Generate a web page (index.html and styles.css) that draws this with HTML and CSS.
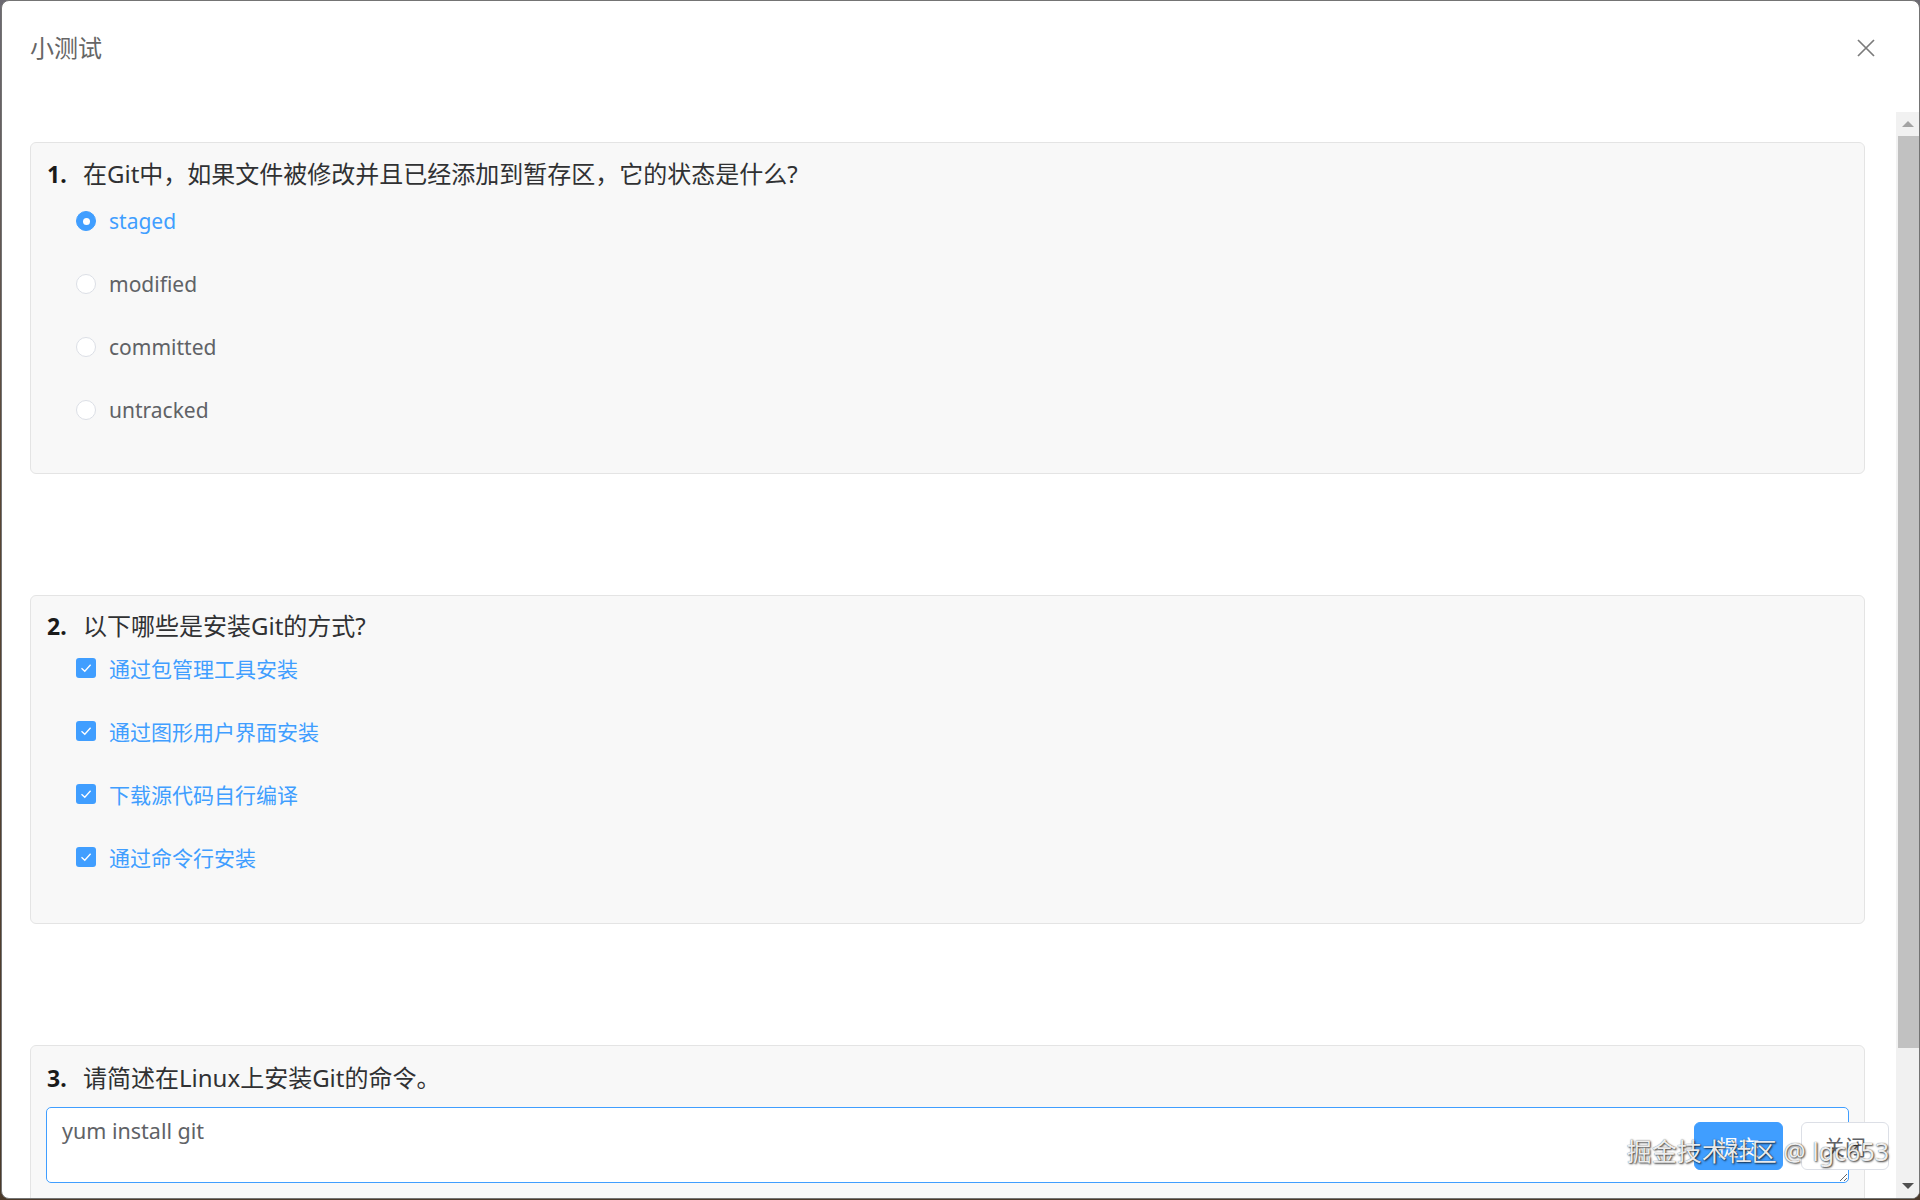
FILE: index.html
```html
<!DOCTYPE html>
<html lang="zh-CN">
<head>
    <meta charset="UTF-8">
    <meta name="viewport" content="width=device-width, initial-scale=1.0">
    <title>小测试</title>
    <link rel="stylesheet" href="styles.css">
</head>
<body>

    <div class="window">
        <!-- Dialog header -->
        <div class="dialog-header">
            <span class="dialog-title">小测试</span>
            <button class="dialog-close" type="button" aria-label="Close">
                <svg width="18" height="18" viewBox="0 0 18 18">
                    <path d="M1 1 L17 17 M17 1 L1 17" stroke="#7b7b7b" stroke-width="1.7" fill="none"/>
                </svg>
            </button>
        </div>

        <div class="dialog-body">
            <div class="quiz">

                <!-- Single choice -->
                <section class="question single">
                    <div class="q-title"><span class="q-no">1.</span>在Git中，如果文件被修改并且已经添加到暂存区，它的状态是什么?</div>
                    <div class="options radios">
                        <label class="option is-checked"><span class="radio"></span>staged</label>
                        <label class="option"><span class="radio"></span>modified</label>
                        <label class="option"><span class="radio"></span>committed</label>
                        <label class="option"><span class="radio"></span>untracked</label>
                    </div>
                </section>

                <!-- Multiple choice -->
                <section class="question multi">
                    <div class="q-title"><span class="q-no">2.</span>以下哪些是安装Git的方式?</div>
                    <div class="options checks">
                        <label class="option is-checked"><span class="checkbox"><svg width="20" height="20" viewBox="0 0 20 20"><path d="M5.5 10.2 L8.8 13.3 L14.6 6.8" stroke="#fff" stroke-width="1.3" fill="none"/></svg></span>通过包管理工具安装</label>
                        <label class="option is-checked"><span class="checkbox"><svg width="20" height="20" viewBox="0 0 20 20"><path d="M5.5 10.2 L8.8 13.3 L14.6 6.8" stroke="#fff" stroke-width="1.3" fill="none"/></svg></span>通过图形用户界面安装</label>
                        <label class="option is-checked"><span class="checkbox"><svg width="20" height="20" viewBox="0 0 20 20"><path d="M5.5 10.2 L8.8 13.3 L14.6 6.8" stroke="#fff" stroke-width="1.3" fill="none"/></svg></span>下载源代码自行编译</label>
                        <label class="option is-checked"><span class="checkbox"><svg width="20" height="20" viewBox="0 0 20 20"><path d="M5.5 10.2 L8.8 13.3 L14.6 6.8" stroke="#fff" stroke-width="1.3" fill="none"/></svg></span>通过命令行安装</label>
                    </div>
                </section>

                <!-- Short answer -->
                <section class="question text">
                    <div class="q-title"><span class="q-no">3.</span>请简述在Linux上安装Git的命令。</div>
                    <textarea class="answer" spellcheck="false">yum install git</textarea>
                </section>

            </div>

            <div class="scrollbar">
                <span class="sb-btn"><span class="arrow-up"></span></span>
                <span class="sb-thumb"></span>
                <span class="sb-track"></span>
                <span class="sb-btn"><span class="arrow-down"></span></span>
            </div>
        </div>

        <div class="dialog-footer">
            <button class="btn btn-primary" type="button">提交</button>
            <button class="btn" type="button">关闭</button>
        </div>

        <div class="watermark">掘金技术社区 @ lgc653</div>
    </div>

</body>
</html>
```

FILE: styles.css
```css
/* Base */
html,
body {
    margin: 0;
}

body {
    width: 1920px;
    height: 1200px;
    padding: 0 0 1px 1px;
    box-sizing: border-box;
    overflow: hidden;
    background: linear-gradient(to bottom, #6c6a72, #5a4634 40%, #4b3a2a);
    font-family: "Noto Sans", "Noto Sans CJK SC", sans-serif;
}

/* Window frame */
.window {
    position: relative;
    height: 1199px;
    box-sizing: border-box;
    border: 1px solid #747474;
    border-radius: 8px;
    background: #fff;
    overflow: hidden;
    display: flex;
    flex-direction: column;
}

/* Header */
.dialog-header {
    flex: none;
    height: 111px;
    box-sizing: border-box;
    padding: 0 44px 17px 28px;
    display: flex;
    align-items: center;
    justify-content: space-between;
}

.dialog-title {
    font-size: 24px;
    line-height: 30px;
    color: #666;
}

.dialog-close {
    width: 18px;
    height: 18px;
    padding: 0;
    border: none;
    background: none;
    display: flex;
}

/* Body */
.dialog-body {
    flex: 1;
    min-height: 0;
    display: flex;
}

.quiz {
    flex: 1;
    overflow: hidden;
    padding: 30px 31px 0 28px;
    display: flex;
    flex-direction: column;
    gap: 121px;
}

.question {
    flex: none;
    background: #f8f8f8;
    border: 1px solid #e4e4e4;
    border-radius: 6px;
    padding: 16px 15px 0;
}

.question.single {
    padding-bottom: 42.5px;
}

.question.multi {
    padding-top: 15px;
    padding-bottom: 46px;
}

.question.text {
    padding-top: 17px;
    padding-bottom: 30px;
}

.q-title {
    font-size: 24px;
    line-height: 30px;
    color: #303133;
    padding-left: 1px;
}

.q-no {
    display: inline-block;
    width: 36px;
    font-size: 23px;
    font-weight: 700;
    color: #1a1a1a;
}

/* Options */
.options {
    display: flex;
    flex-direction: column;
    gap: 23px;
    padding-left: 30px;
}

.radios {
    margin-top: 12px;
}

.checks {
    margin-top: 7px;
}

.option {
    height: 40px;
    display: flex;
    align-items: center;
    gap: 13px;
    font-size: 21px;
    color: #606266;
}

.option.is-checked {
    color: #409eff;
}

.radio {
    width: 20px;
    height: 20px;
    box-sizing: border-box;
    border: 1px solid #dcdfe6;
    border-radius: 50%;
    background: #fff;
    display: flex;
    align-items: center;
    justify-content: center;
}

.is-checked .radio {
    background: #409eff;
    border-color: #409eff;
}

.is-checked .radio::after {
    content: "";
    width: 7px;
    height: 7px;
    border-radius: 50%;
    background: #fff;
}

.checkbox {
    width: 20px;
    height: 20px;
    border-radius: 3px;
    background: #409eff;
    display: flex;
}

/* Answer box */
.answer {
    display: block;
    width: 100%;
    height: 76px;
    margin-top: 14px;
    box-sizing: border-box;
    border: 1px solid #409eff;
    border-radius: 5px;
    padding: 8px 15px;
    font-family: inherit;
    font-size: 21.5px;
    line-height: 30px;
    color: #606266;
    background: #fff;
    resize: vertical;
    outline: none;
}

/* Scrollbar */
.scrollbar {
    flex: none;
    width: 23px;
    background: #f1f1f1;
    display: flex;
    flex-direction: column;
}

.sb-btn {
    height: 24px;
    flex: none;
    display: flex;
    align-items: center;
    justify-content: center;
}

.arrow-up {
    border-left: 6px solid transparent;
    border-right: 6px solid transparent;
    border-bottom: 6px solid #a3a3a3;
}

.arrow-down {
    border-left: 6px solid transparent;
    border-right: 6px solid transparent;
    border-top: 6px solid #505050;
}

.sb-thumb {
    flex: none;
    height: 912px;
    margin-left: 2px;
    background: #c1c1c1;
}

.sb-track {
    flex: 1;
}

/* Footer buttons */
.dialog-footer {
    position: absolute;
    right: 30px;
    bottom: 28px;
    display: flex;
    gap: 18px;
}

.btn {
    width: 88px;
    height: 48px;
    padding: 0;
    border: 1px solid #dcdfe6;
    border-radius: 6px;
    background: #fff;
    color: #606266;
    font-family: inherit;
    font-size: 21px;
}

.btn-primary {
    width: 89px;
    background: #409eff;
    border-color: #409eff;
    color: #fff;
}

/* Image host mark */
.watermark {
    position: absolute;
    right: 30px;
    top: 1136px;
    font-size: 25px;
    line-height: 28px;
    color: rgba(255, 255, 255, 0.92);
    text-shadow: 1px 1px 2px rgba(0, 0, 0, 0.75), 0 0 1px rgba(0, 0, 0, 0.6);
    white-space: nowrap;
}
```
